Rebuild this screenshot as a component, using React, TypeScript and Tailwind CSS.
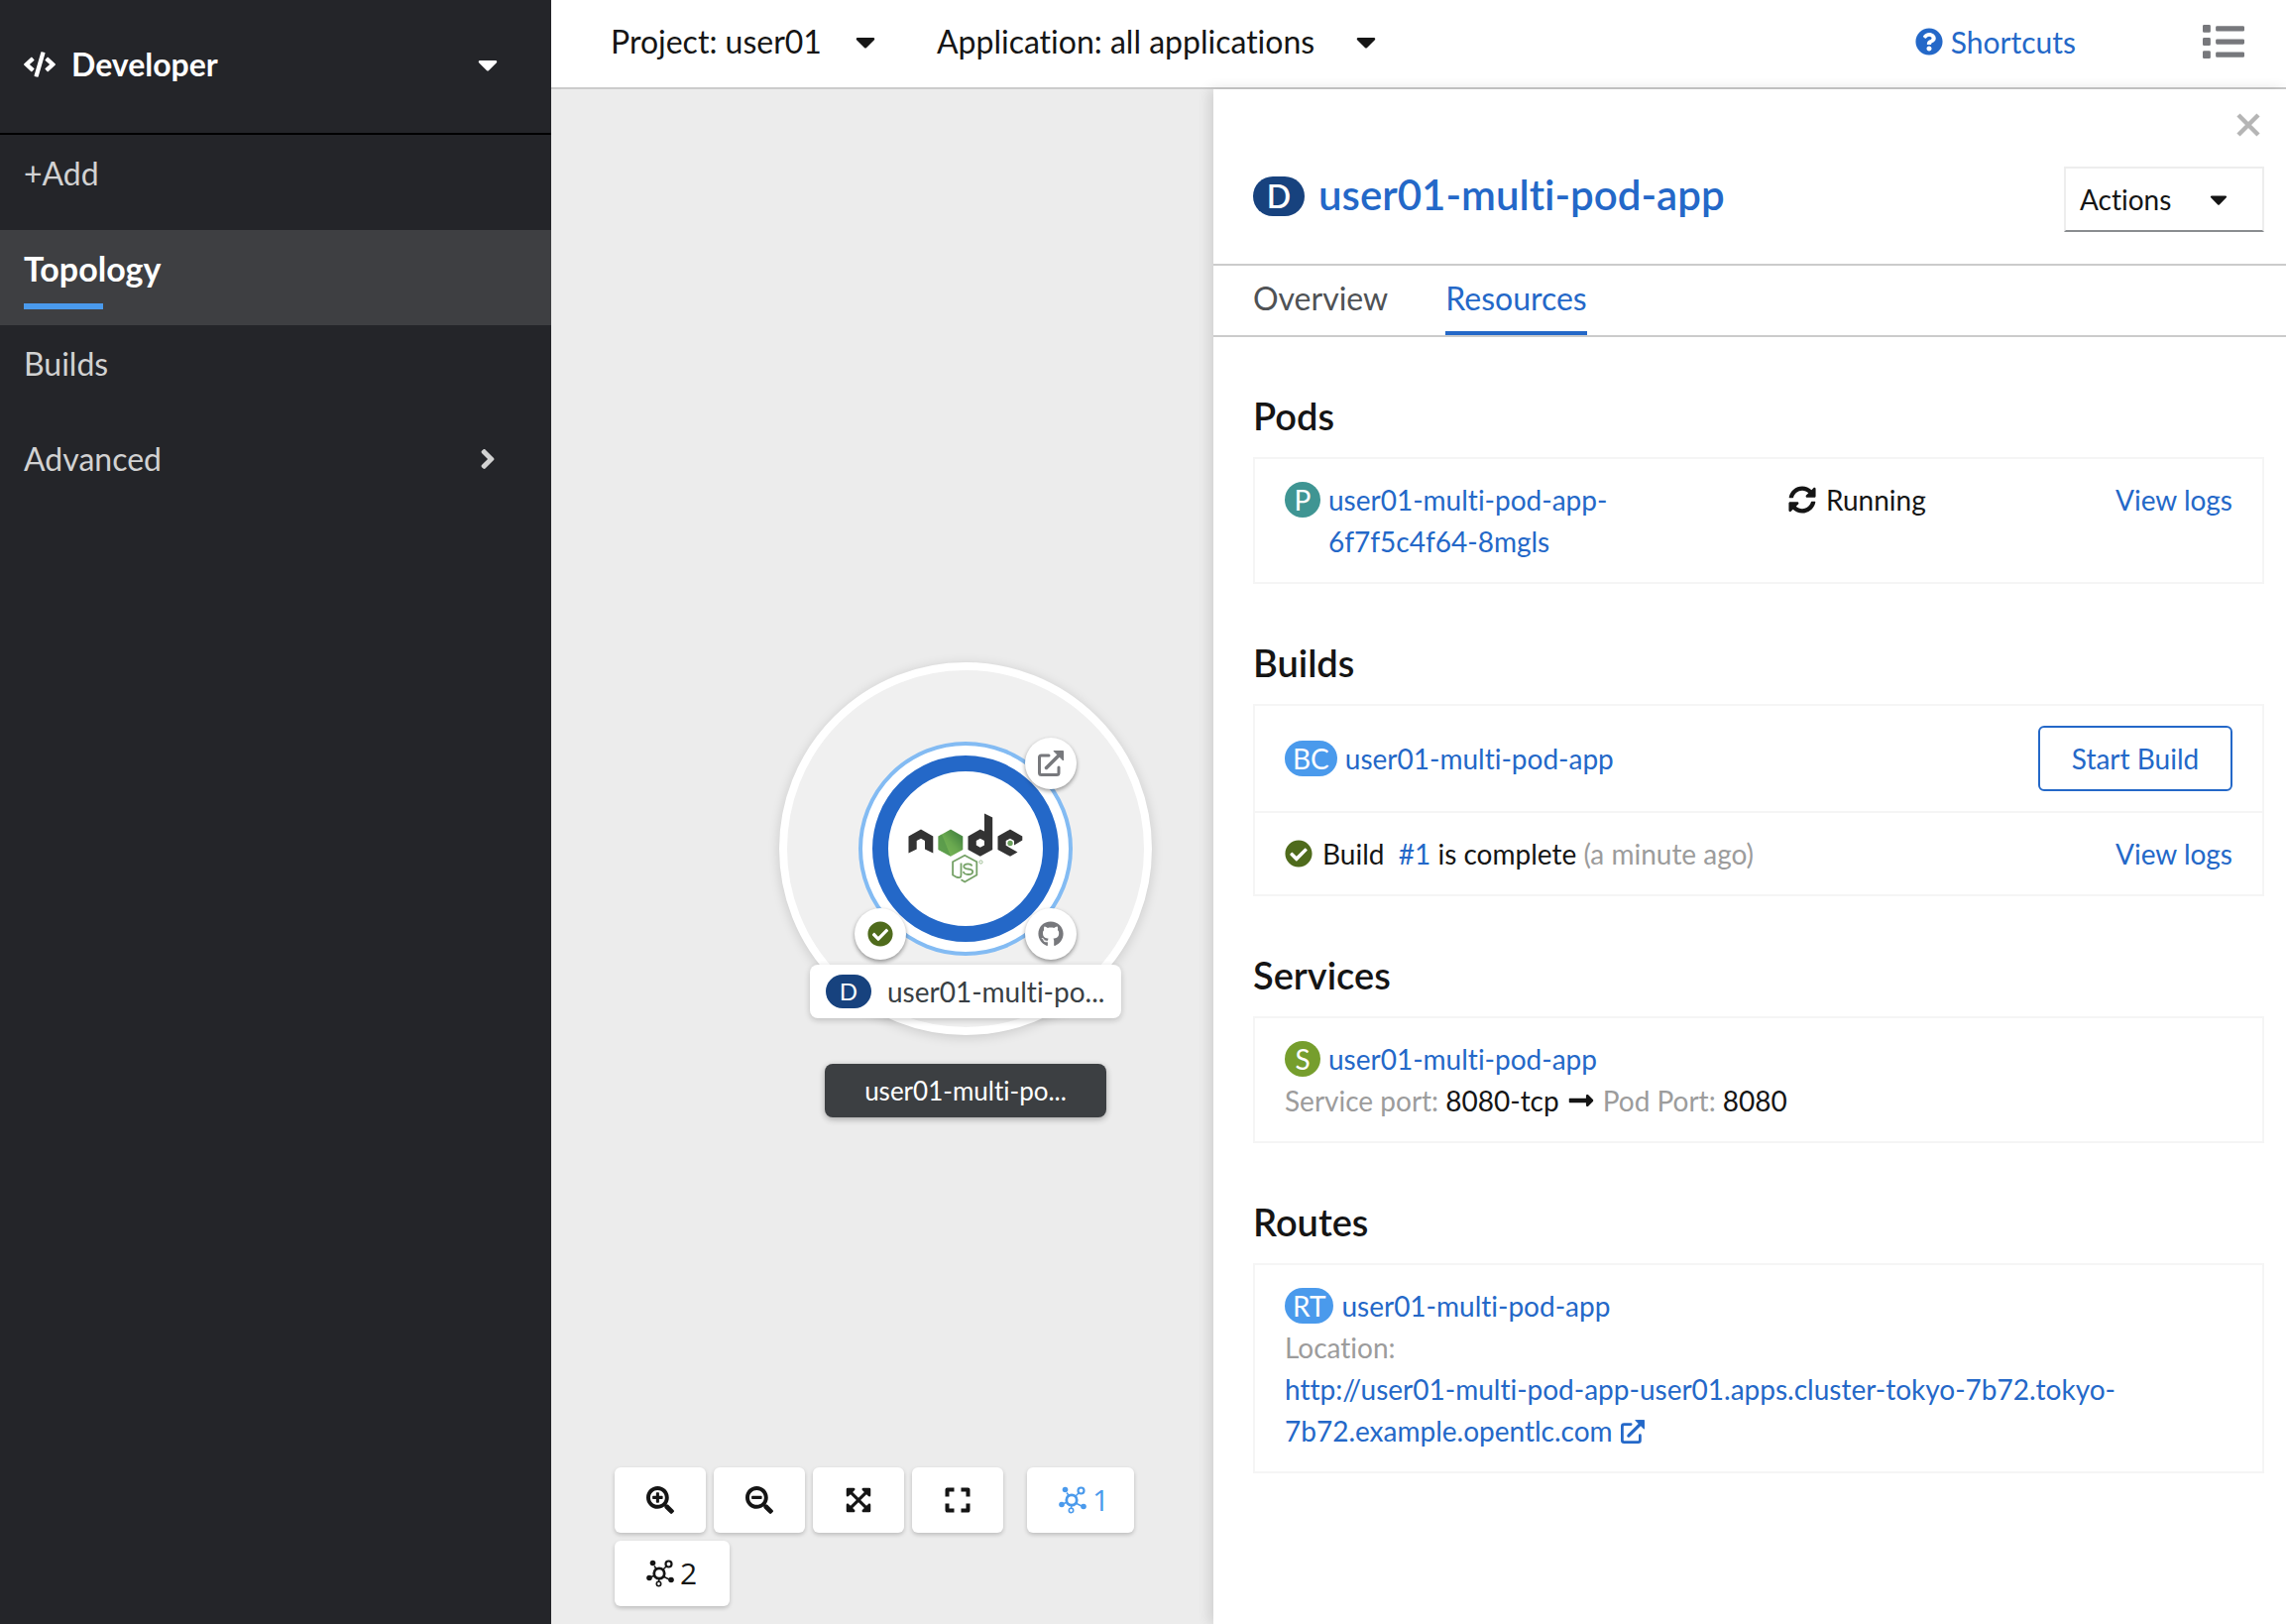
import { FaCode, FaCaretDown, FaAngleRight, FaQuestionCircle, FaList, FaSyncAlt, FaCheckCircle, FaLongArrowAltRight, FaGithub, FaSearchPlus, FaSearchMinus, FaExpandArrowsAlt } from 'react-icons/fa';
import type { ReactNode } from 'react';

function ExternalIcon({ className }: { className: string }) {
  return (
    <svg viewBox="0 0 26 26" className={className} aria-hidden="true">
      <path d="M11 5H3.500Q1.500 5 1.500 7V22.500Q1.500 24.500 3.500 24.500H19Q21 24.500 21 22.500V17" fill="none" stroke="currentColor" strokeWidth="3" strokeLinecap="round" />
      <path d="M8.500 17.500 21 5" stroke="currentColor" strokeWidth="3.500" strokeLinecap="round" />
      <path d="M16 0.500H25.500V10Z" fill="currentColor" stroke="currentColor" strokeLinejoin="round" />
    </svg>
  );
}

function ExpandIcon() {
  return (
    <svg viewBox="0 0 28 28" className="size-7" aria-hidden="true" fill="none" stroke="currentColor" strokeWidth="4" strokeLinejoin="round">
      <path d="M3.500 10.500V3.500H10.500M17.500 3.500H24.500V10.500M24.500 17.500V24.500H17.500M10.500 24.500H3.500V17.500" />
    </svg>
  );
}

function TopologyIcon() {
  return (
    <svg viewBox="0 0 28 28" className="size-7" aria-hidden="true" fill="none" stroke="currentColor">
      <circle cx="13" cy="14" r="5.200" strokeWidth="2.800" />
      <path d="M16.500 10.500 20 7M10.500 10 8 6.500M8.500 16 4 18M17 17 23 20M13 19.500 12.500 22" strokeWidth="1.500" />
      <circle cx="22.500" cy="4.500" r="3" strokeWidth="2.200" />
      <circle cx="12.500" cy="24.500" r="2.200" strokeWidth="1.600" />
      <g fill="currentColor" stroke="none">
        <circle cx="6.500" cy="3.500" r="2.800" />
        <circle cx="3" cy="18.500" r="2.800" />
        <circle cx="25" cy="20.500" r="2.800" />
      </g>
    </svg>
  );
}

function NodeLogo() {
  return (
    <svg viewBox="0 0 116 72" className="h-[72px] w-[116px] shrink-0" aria-label="Node.js" role="img">
      <defs>
        <linearGradient id="leaf" x1="1" y1="0" x2="0" y2="1">
          <stop offset="0.200" stopColor="#4a8a43" />
          <stop offset="0.500" stopColor="#69a84f" />
          <stop offset="1" stopColor="#7fbd5a" />
        </linearGradient>
      </defs>
      <g fill="#333333" fillRule="evenodd">
        <path d="M0.500 40.500V23.500L13 16.500 25.300 23.500V40.500L17 36.500V28L13 25.800 8.700 28V36.500Z" />
        <path d="M77 0.500 85.200 4.500V37L72.800 43.700 60.500 37V23.500L72.800 16.500 77 18.500ZM72.800 25.700 68.800 28V32.500L72.800 34.800 77 32.500V28Z" />
        <path d="M90.500 23.500 103 16.500 115.300 23.500V27.500L107 32.500V28L103 25.700 98.700 28V32.700L103 35.200 110.500 39.500 103 43.700 90.500 37Z" />
      </g>
      <path d="M30.500 23.500 43 16.500 55.300 23.500V37L43 43.700 30.500 37Z" fill="url(#leaf)" />
      <path d="M34 21.500 43 43.700 30.500 37V23.500Z" fill="#4f8f47" opacity="0.600" />
      <circle cx="103" cy="30.500" r="2.700" fill="#6ba05b" />
      <g fill="none" stroke="#76a267" strokeWidth="1.800">
        <path d="M53.500 67.300 57.200 69.500 69.300 62.600V49.300L57.200 42.800 45.100 49.300V62.600L48.800 64.700Q53.500 66.300 53.500 62.500V50.500" />
        <path d="M64.500 53.500Q64 51.300 60.500 51.300 56.300 51.300 56.300 54 56.300 56.200 60.500 56.500 65.200 56.900 65.200 59.200 65.200 62 60.700 62 56.200 62 55.900 59" />
        <circle cx="73.500" cy="49.500" r="1.600" strokeWidth="0.700" />
      </g>
    </svg>
  );
}

function Badge({ children, color }: { children: ReactNode; color: string }) {
  return (
    <span className={`inline-flex h-9 min-w-9 shrink-0 items-center justify-center rounded-full px-2 text-[28px] leading-9 text-white ${color}`}>
      {children}
    </span>
  );
}

function Section({ title, children }: { title: string; children: ReactNode }) {
  return (
    <section className="mt-[60px]">
      <h2 className="mb-[22px] text-[38px] leading-[39px] font-semibold">{title}</h2>
      <div className="divide-y-2 divide-[#f5f5f5] border-2 border-[#f5f5f5]">{children}</div>
    </section>
  );
}

const link = 'text-[#2468c8]';
const tool = 'flex h-[66px] items-center gap-[6px] rounded-md bg-white shadow-[0_2px_4px_rgba(3,3,3,0.2)]';
const decorator = 'absolute flex size-[52px] items-center justify-center rounded-full bg-white shadow-[0_2px_4px_rgba(3,3,3,0.4)]';

export default function App() {
  return (
    <div className="flex min-h-screen font-['Lato',sans-serif] text-[28px] leading-[42px] text-[#151515] [font-variant-ligatures:none]">
      <aside className="w-[556px] shrink-0 bg-[#242529]">
        <button className="flex h-[136px] w-full items-center border-b-2 border-black pr-12 pb-1 pl-6 text-[32px] font-bold text-white">
          <FaCode className="mr-4 size-8" />
          Developer
          <FaCaretDown className="ml-auto size-8" />
        </button>
        <nav className="text-[32px] text-[#d2d2d2]">
          <a href="#add" className="block h-24 px-6 pt-[18px]">+Add</a>
          <a href="#topology" className="block h-24 bg-[#3e3f42] px-6 pt-[18px] text-[34px] font-bold text-white">
            Topology
            <span className="mt-[14px] block h-[6px] w-20 bg-[#4a9aec]" />
          </a>
          <a href="#builds" className="block h-24 px-6 pt-[18px]">Builds</a>
          <button className="flex h-24 w-full items-center pr-12 pb-[18px] pl-6">
            Advanced
            <FaAngleRight className="ml-auto size-8" />
          </button>
        </nav>
      </aside>

      <div className="flex min-w-0 flex-1 flex-col">
        <header className="flex h-[90px] items-center border-b-2 border-[#cbcbcb] bg-white pb-1 pl-[60px] text-[32px]">
          <button className="flex items-center gap-7">Project: user01 <FaCaretDown className="size-8" /></button>
          <button className="ml-14 flex items-center gap-9">Application: all applications <FaCaretDown className="size-8" /></button>
          <a href="#shortcuts" className={`ml-auto flex items-center gap-2 text-[30px] ${link}`}>
            <FaQuestionCircle className="size-7" />
            Shortcuts
          </a>
          <button aria-label="List view" className="mr-[42px] ml-32 text-[#77787c]"><FaList className="size-[42px]" /></button>
        </header>

        <div className="flex flex-1">
          <main className="relative min-w-0 flex-1 bg-[#ececec]">
            <div className="absolute top-[578px] left-[230px] size-[376px] rounded-full border-8 border-white bg-[#f0f0f0] shadow-[0_2px_12px_rgba(3,3,3,0.15)]" />
            <div className="absolute top-[658px] left-[310px] flex size-[216px] items-center justify-center rounded-full border-4 border-[#83bbf3] bg-white">
              <div className="flex size-[188px] items-center justify-center rounded-full border-[16px] border-[#2468c8]">
                <NodeLogo />
              </div>
            </div>
            <a href="#open" aria-label="Open URL" className={`top-[654px] left-[478px] text-[#77787c] ${decorator}`}><ExternalIcon className="size-[26px]" /></a>
            <a href="#build" aria-label="Build complete" className={`top-[826px] left-[306px] text-[#4f6b1c] ${decorator}`}><FaCheckCircle className="size-[26px]" /></a>
            <a href="#source" aria-label="Edit source" className={`top-[826px] left-[478px] text-[#77787c] ${decorator}`}><FaGithub className="size-[26px]" /></a>
            <div className="absolute top-[883px] left-[261px] flex h-[54px] w-[314px] items-center rounded-lg bg-white pl-4 text-[#393f44] shadow-[0_2px_6px_rgba(3,3,3,0.2)]">
              <span className="mr-4 flex h-[34px] w-[46px] items-center justify-center rounded-full bg-[#17427e] text-[24px] text-white">D</span>
              user01-multi-po...
            </div>
            <div className="absolute top-[983px] left-[276px] flex h-[54px] w-[284px] items-center justify-center rounded-lg bg-[#3c3f42] text-[26px] text-white shadow-[0_2px_6px_rgba(3,3,3,0.3)]">user01-multi-po...</div>

            <div className="absolute bottom-[18px] left-16 flex w-[560px] flex-wrap gap-2 font-['Open_Sans',sans-serif] text-[30px]">
              <button aria-label="Zoom in" className={`w-[92px] justify-center ${tool}`}><FaSearchPlus className="size-7" /></button>
              <button aria-label="Zoom out" className={`w-[92px] justify-center ${tool}`}><FaSearchMinus className="size-7" /></button>
              <button aria-label="Fit to screen" className={`w-[92px] justify-center ${tool}`}><FaExpandArrowsAlt className="size-7" /></button>
              <button aria-label="Reset view" className={`w-[92px] justify-center ${tool}`}><ExpandIcon /></button>
              <button className={`ml-4 w-[108px] pl-8 text-[#4a9aec] ${tool}`}><TopologyIcon />1</button>
              <button className={`w-[116px] pl-8 ${tool}`}><TopologyIcon />2</button>
            </div>
          </main>

          <section className="relative w-[1082px] shrink-0 bg-white shadow-[-4px_0_12px_rgba(3,3,3,0.12)]">
            <div className="flex h-[78px] items-end justify-end pr-[26px]">
              <button aria-label="Close" className="mb-[30px] text-[#b5b5b5]">
                <svg viewBox="0 0 24 24" className="size-6" stroke="currentColor" strokeWidth="4.500"><path d="M2 2 22 22M22 2 2 22" /></svg>
              </button>
            </div>
            <div className="flex h-[100px] items-start border-b-2 border-[#cbcbcb] pr-[22px] pl-10">
              <span className="mt-[10px] mr-[14px] flex h-10 w-[52px] items-center justify-center rounded-full bg-[#17427e] text-[32px] font-semibold text-white">D</span>
              <h1 className="text-[42px] leading-[56px] font-semibold"><a href="#app" className={link}>user01-multi-pod-app</a></h1>
              <button className="ml-auto flex h-[66px] w-[202px] items-center justify-between border-2 border-[#ededed] border-b-[#8a8d90] pr-[30px] pl-[14px]">
                Actions <FaCaretDown className="size-7" />
              </button>
            </div>
            <div className="flex h-[72px] gap-[58px] border-b-2 border-[#cbcbcb] pl-10 text-[32px]">
              <button className="border-b-4 border-transparent text-[#4f5255]">Overview</button>
              <button className={`border-b-4 border-[#2468c8] ${link}`}>Resources</button>
            </div>

            <div className="pr-[22px] pl-10">
              <Section title="Pods">
                <div className="flex px-[30px] py-5">
                  <div className="flex w-[508px] items-start gap-2">
                    <div className="flex h-[42px] items-center"><Badge color="bg-[#3f9593]">P</Badge></div>
                    <a href="#pod" className={link}>user01-multi-pod-app-<br />6f7f5c4f64-8mgls</a>
                  </div>
                  <div className="flex h-[42px] items-center gap-[10px]"><FaSyncAlt className="size-7" />Running</div>
                  <a href="#pod-logs" className={`ml-auto ${link}`}>View logs</a>
                </div>
              </Section>
              <Section title="Builds">
                <div className="flex items-center gap-2 px-[30px] py-5">
                  <Badge color="bg-[#4a9aec]">BC</Badge>
                  <a href="#bc" className={link}>user01-multi-pod-app</a>
                  <button className={`ml-auto h-[66px] w-[196px] rounded-md border-2 border-[#2468c8] ${link}`}>Start Build</button>
                </div>
                <div className="flex items-center px-[30px] py-5">
                  <FaCheckCircle className="mr-[10px] size-7 text-[#4f6b1c]" />
                  <span>Build &nbsp;<a href="#build-1" className={link}>#1</a> is complete <span className="text-[#9c9c9c]">(a minute ago)</span></span>
                  <a href="#build-logs" className={`ml-auto ${link}`}>View logs</a>
                </div>
              </Section>
              <Section title="Services">
                <div className="px-[30px] py-5">
                  <div className="flex h-[42px] items-center gap-2">
                    <Badge color="bg-[#769e2d]">S</Badge>
                    <a href="#service" className={link}>user01-multi-pod-app</a>
                  </div>
                  <div className="flex items-center gap-2">
                    <span><span className="text-[#9c9c9c]">Service port:</span> 8080-tcp</span>
                    <FaLongArrowAltRight className="size-7" />
                    <span><span className="text-[#9c9c9c]">Pod Port:</span> 8080</span>
                  </div>
                </div>
              </Section>
              <Section title="Routes">
                <div className="px-[30px] py-5">
                  <div className="flex h-[42px] items-center gap-2">
                    <Badge color="bg-[#4a9aec]">RT</Badge>
                    <a href="#route" className={link}>user01-multi-pod-app</a>
                  </div>
                  <div className="text-[#9c9c9c]">Location:</div>
                  <a href="#location" className={link}>
                    http://user01-multi-pod-app-user01.apps.cluster-tokyo-7b72.tokyo-<br />7b72.example.opentlc.com
                    <ExternalIcon className="ml-2 inline-block size-6 align-[-2px]" />
                  </a>
                </div>
              </Section>
            </div>
          </section>
        </div>
      </div>
    </div>
  );
}
